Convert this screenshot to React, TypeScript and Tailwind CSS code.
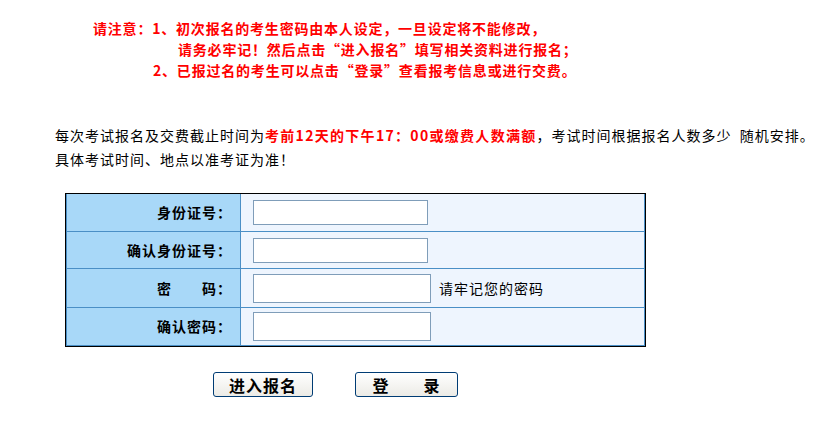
import React from 'react'

const font = { fontFamily: '"Noto Sans CJK SC", "Noto Sans", sans-serif' }

function Row({ label, wide, hint, h }: { label: string; wide?: boolean; hint?: string; h: string }) {
    return (
        <div className={`flex border-b border-[#4a8fc6] ${h}`}>
            <div className="w-[174px] shrink-0 bg-[#a8d8f8] border-r border-[#4a8fc6] flex items-center justify-end pr-[8px] text-[14px] font-bold tracking-[1px] text-black whitespace-pre">
                {label}
            </div>
            <div className="flex-1 bg-[#eef5fe] flex items-center pl-[12px]">
                <input
                    type={wide ? 'password' : 'text'}
                    className={`bg-white border border-[#7f9db9] outline-none ${wide ? 'w-[178px] h-[29px]' : 'w-[175px] h-[25px]'}`}
                />
                {hint && <span className="ml-[8px] text-[14px] tracking-[1px] text-black">{hint}</span>}
            </div>
        </div>
    )
}

export default function App() {
    return (
        <div className="w-[827px] h-[435px] bg-white overflow-hidden" style={font}>
            {/* notice */}
            <div className="pt-[18px] text-[14px] leading-[21px] font-bold tracking-[0.8px] text-[#ff0000] whitespace-nowrap">
                <div className="ml-[93px]">请注意：1、初次报名的考生密码由本人设定，一旦设定将不能修改，</div>
                <div className="ml-[178px]">请务必牢记！然后点击“进入报名”填写相关资料进行报名；</div>
                <div className="ml-[153px]">2、已报过名的考生可以点击“登录”查看报考信息或进行交费。</div>
            </div>

            <div className="mt-[42px] ml-[55px] text-[14px] leading-[24px] tracking-[1px] text-black whitespace-pre">
                <div>
                    每次考试报名及交费截止时间为<span className="font-bold text-[#ff0000] tracking-[1.3px]">考前12天的下午17：00或缴费人数满额</span>，考试时间根据报名人数多少  随机安排。
                </div>
                <div>具体考试时间、地点以准考证为准！</div>
            </div>

            {/* form table */}
            <div className="mt-[22px] ml-[65px] w-[581px] border border-black">
                <div className="border-l border-r border-[#4a8fc6]">
                    <Row label="身份证号：" h="h-[38px]" />
                    <Row label="确认身份证号：" h="h-[37px]" />
                    <Row label={'密　　码：'} wide hint="请牢记您的密码" h="h-[39px]" />
                    <Row label="确认密码：" wide h="h-[38px]" />
                </div>
            </div>

            <div className="mt-[25px] ml-[213px] flex gap-[42px]">
                <button className="w-[100px] h-[25px] rounded-[3px] border border-[#003c74] bg-gradient-to-b from-white to-[#ecebe6] text-[16px] font-bold tracking-[1px] text-black leading-none">
                    进入报名
                </button>
                <button className="w-[103px] h-[25px] rounded-[3px] border border-[#003c74] bg-gradient-to-b from-white to-[#ecebe6] text-[16px] font-bold tracking-[1px] text-black leading-none whitespace-pre">
                    登　　录
                </button>
            </div>
        </div>
    )
}
